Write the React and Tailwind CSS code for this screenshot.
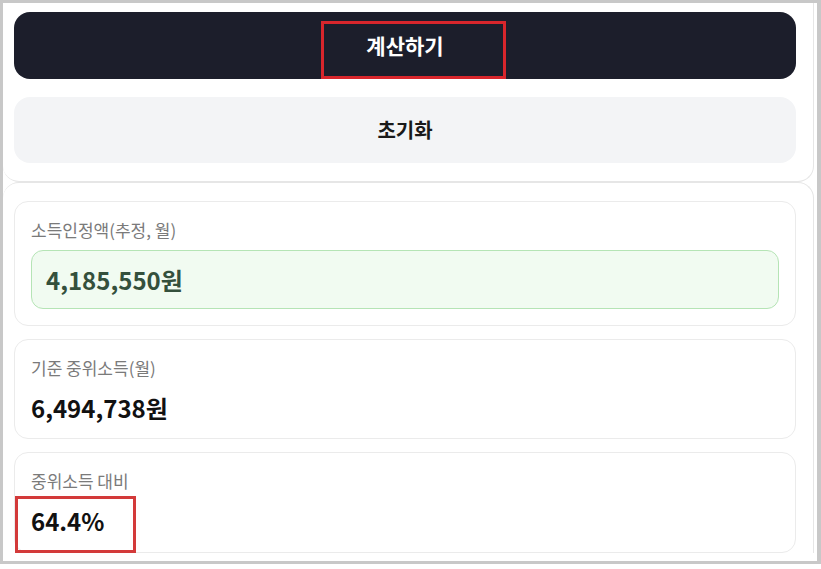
import React from "react";

const font = { fontFamily: '"Noto Sans CJK KR", "Noto Sans", sans-serif' };

function ResultCard({ label, children, className = "" }) {
  return (
    <div className={`rounded-[14px] border border-[#ebebeb] bg-white px-[16px] pt-[16px] ${className}`}>
      <div className="text-[17px] leading-[24px] text-[#7a7a7a]">{label}</div>
      {children}
    </div>
  );
}

export default function App() {
  return (
    <div className="relative h-[569px] w-[821px] bg-white" style={font}>
      <div className="h-[564px] overflow-hidden border-t-[3px] border-l-[3px] border-r-[4px] border-b-[3px] border-[#c8c8c8] bg-white">
        {/* buttons */}
        <div className="mr-[3px] rounded-b-[16px] border-b border-r border-[#e6e6e6] pl-[11px] pr-[17px] pt-[9px] pb-[18px]">
          <button className="flex h-[67px] w-full items-center justify-center rounded-[16px] bg-[#1c1e2b] text-[21px] font-bold text-white">
            계산하기
          </button>
          <button className="mt-[18px] flex h-[66px] w-full items-center justify-center rounded-[16px] bg-[#f3f4f6] text-[20px] font-bold text-[#1a1a1a]">
            초기화
          </button>
        </div>

        {/* results */}
        <div className="mr-[3px] rounded-t-[16px] border-t border-r border-[#e6e6e6] pl-[11px] pr-[17px] pt-[18px]">
          <ResultCard label="소득인정액(추정, 월)" className="pb-[16px]">
            <div className="mt-[8px] flex h-[59px] items-center rounded-[12px] border-[1.5px] border-[#b5e4b5] bg-[#f1fbf1] px-[14px]">
              <span className="text-[24px] font-bold text-[#34503c]">4,185,550원</span>
            </div>
          </ResultCard>

          <ResultCard label="기준 중위소득(월)" className="mt-[13px] pb-[14px]">
            <div className="mt-[12px] text-[24px] font-bold leading-[32px] text-[#111]">6,494,738원</div>
          </ResultCard>

          <ResultCard label="중위소득 대비" className="mt-[13px] pb-[15px]">
            <div className="mt-[12px] text-[24px] font-bold leading-[32px] text-[#111]">64.4%</div>
          </ResultCard>
        </div>
      </div>

      {/* annotation boxes */}
      <div className="pointer-events-none absolute left-[321px] top-[21px] h-[58px] w-[185px] border-[3px] border-[#d8262c]" />
      <div className="pointer-events-none absolute left-[15px] top-[496px] h-[57px] w-[121px] border-[3px] border-[#d33a3a]" />
    </div>
  );
}
